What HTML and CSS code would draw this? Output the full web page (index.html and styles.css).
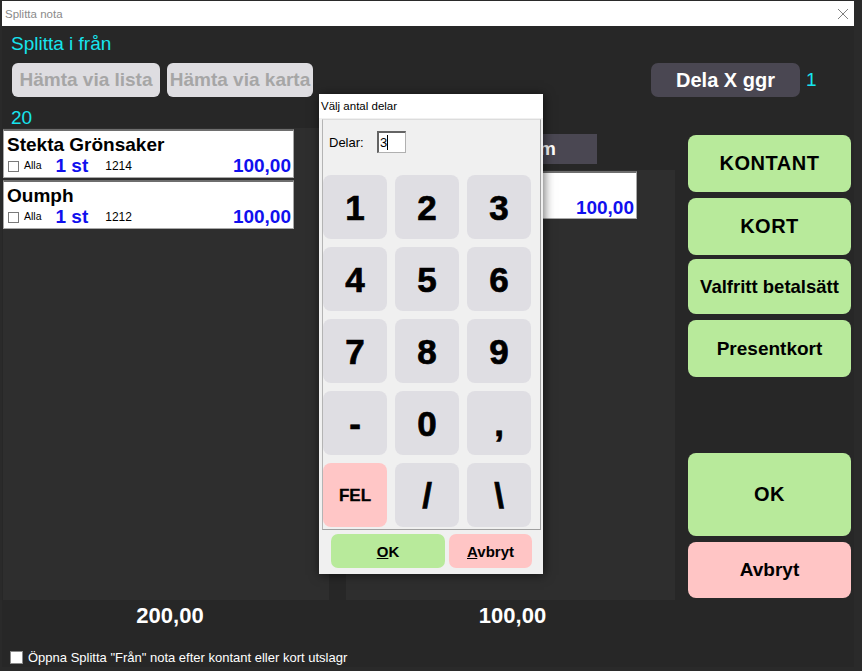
FILE: index.html
```html
<!DOCTYPE html>
<html lang="sv">
<head>
<meta charset="UTF-8">
<meta name="viewport" content="width=device-width, initial-scale=1.0">
<title>Splitta nota</title>
<link rel="stylesheet" href="styles.css">
</head>
<body>
<div class="window">
    <div class="titlebar">
        <span class="title">Splitta nota</span>
        <svg class="close" width="12" height="12" viewBox="0 0 12 12">
            <path d="M1 1L11 11M11 1L1 11" stroke="#808080" stroke-width="1" fill="none"/>
        </svg>
    </div>
    <div class="content">
        <div class="caption">Splitta i från</div>
        <div class="toolbar">
            <button class="btn btn-fetch">Hämta via lista</button>
            <button class="btn btn-fetch">Hämta via karta</button>
            <button class="btn btn-split">Dela X ggr</button>
            <span class="split-count">1</span>
        </div>
        <div class="count">20</div>

        <div class="main">
            <div class="panel panel-from">
                <div class="item">
                    <div class="item-name">Stekta Grönsaker</div>
                    <div class="item-row">
                        <span class="check"></span>
                        <span class="all">Alla</span>
                        <span class="qty">1 st</span>
                        <span class="code">1214</span>
                        <span class="price">100,00</span>
                    </div>
                </div>
                <div class="item">
                    <div class="item-name">Oumph</div>
                    <div class="item-row">
                        <span class="check"></span>
                        <span class="all">Alla</span>
                        <span class="qty">1 st</span>
                        <span class="code">1212</span>
                        <span class="price">100,00</span>
                    </div>
                </div>
            </div>

            <div class="middle">
                <div class="tab">Till rum</div>
                <div class="panel panel-to">
                    <!-- name and quantity sit under the dialog -->
                    <div class="item">
                        <div class="item-name"></div>
                        <div class="item-row">
                            <span class="price">100,00</span>
                        </div>
                    </div>
                </div>
            </div>

            <div class="pay">
                <button class="btn btn-pay btn-caps pay-cash">KONTANT</button>
                <button class="btn btn-pay btn-caps pay-card">KORT</button>
                <button class="btn btn-pay pay-any">Valfritt betalsätt</button>
                <button class="btn btn-pay pay-gift">Presentkort</button>
                <button class="btn btn-pay btn-caps pay-ok">OK</button>
                <button class="btn btn-pay btn-cancel pay-cancel">Avbryt</button>
            </div>
        </div>

        <div class="totals">
            <span class="total total-from">200,00</span>
            <span class="total total-to">100,00</span>
        </div>

        <div class="footer">
            <span class="box"></span>
            <span class="footer-text">Öppna Splitta "Från" nota efter kontant eller kort utslagr</span>
        </div>
    </div>

    <!-- numpad dialog on top of the window -->
    <div class="dialog">
        <div class="dialog-title">Välj antal delar</div>
        <div class="group">
            <div class="parts">
                <span class="parts-label">Delar:</span>
                <span class="parts-input">3<i class="caret"></i></span>
            </div>
            <div class="keys">
                <button class="key">1</button>
                <button class="key">2</button>
                <button class="key">3</button>
                <button class="key">4</button>
                <button class="key">5</button>
                <button class="key">6</button>
                <button class="key">7</button>
                <button class="key">8</button>
                <button class="key">9</button>
                <button class="key">-</button>
                <button class="key">0</button>
                <button class="key">,</button>
                <button class="key key-err">FEL</button>
                <button class="key">/</button>
                <button class="key">\</button>
            </div>
        </div>
        <div class="dialog-actions">
            <button class="dbtn dbtn-ok"><u>O</u>K</button>
            <button class="dbtn dbtn-cancel"><u>A</u>vbryt</button>
        </div>
    </div>
</div>
</body>
</html>
```

FILE: styles.css
```css
html, body {
    margin: 0;
    padding: 0;
    background-color: #2a2a2a;
    font-family: "Liberation Sans", Arial, sans-serif;
}

body {
    height: 671px;
    overflow: hidden;
}

.window {
    position: relative;
    margin: 1px 0 0 2px;
    width: 852px;
    height: 666px;
    background-color: #272727;
    overflow: hidden;
}

.titlebar {
    height: 25px;
    background-color: #fff;
    display: flex;
    align-items: center;
    justify-content: space-between;
}
.title {
    font-size: 11.5px;
    color: #8a8a8a;
    padding-left: 3px;
}
.close {
    margin-right: 5px;
}

.btn {
    font-family: "Liberation Sans", Arial, sans-serif;
    font-weight: bold;
    border: none;
    padding: 0;
    cursor: pointer;
}

.caption {
    padding: 7px 0 0 9px;
    line-height: 22px;
    font-size: 19px;
    color: #16e4ee;
}

.toolbar {
    display: flex;
    align-items: center;
    margin-top: 8px;
    height: 34px;
}
.btn-fetch {
    height: 34px;
    font-size: 19px;
    color: #a6a6a6;
    background-color: #dedde1;
    border-radius: 6px;
}
.btn-fetch:first-child {
    margin-left: 10px;
    width: 148px;
}
.btn-fetch + .btn-fetch {
    margin-left: 7px;
    width: 146px;
}
.btn-split {
    margin-left: auto;
    width: 149px;
    height: 34px;
    font-size: 20px;
    color: #fff;
    background-color: #4a4752;
    border-radius: 7px;
}
.split-count {
    width: 54px;
    padding-left: 6px;
    box-sizing: border-box;
    font-size: 19px;
    color: #16e4ee;
}

.count {
    height: 31px;
    box-sizing: border-box;
    padding: 10px 0 0 9px;
    line-height: 21px;
    font-size: 19px;
    color: #16e4ee;
}

.main {
    display: flex;
    height: 472px;
    padding-left: 1px;
}

.panel {
    background-color: #2e2e2e;
}
.panel-from {
    width: 326px;
    padding-top: 1px;
}

.middle {
    width: 329px;
    margin-left: 17px;
    display: flex;
    flex-direction: column;
}
.tab {
    margin-top: 6px;
    width: 251px;
    height: 30px;
    box-sizing: border-box;
    padding-right: 41px;
    display: flex;
    align-items: center;
    justify-content: flex-end;
    background-color: #4a4752;
    color: #fff;
    font-weight: bold;
    font-size: 19px;
}
.panel-to {
    margin-top: 6px;
    flex: 1;
    padding-top: 1px;
}

.item {
    width: 291px;
    height: 49px;
    box-sizing: border-box;
    background-color: #fff;
    border: 1px solid #a8a8a8;
    border-top: 2px solid #6e6e6e;
    padding: 4px 2px 0 3px;
    margin-bottom: 2px;
}
.panel-to .item {
    height: 48px;
}
.item-name {
    height: 20px;
    line-height: 20px;
    font-size: 19px;
    font-weight: bold;
    color: #000;
}
.item-row {
    display: flex;
    align-items: center;
    height: 20px;
    margin-top: 1px;
}
.check {
    width: 11px;
    height: 11px;
    box-sizing: border-box;
    border: 1px solid #7a7a7a;
    background-color: #fff;
    margin-left: 1px;
}
.all {
    font-size: 10.5px;
    margin-left: 5px;
    margin-top: -3px;
    color: #000;
}
.qty {
    margin-left: 14px;
    font-size: 19px;
    font-weight: bold;
    color: #1010ee;
}
.code {
    margin-left: 17px;
    font-size: 12px;
    color: #000;
}
.price {
    margin-left: auto;
    font-size: 19px;
    font-weight: bold;
    color: #1010ee;
}

.pay {
    width: 163px;
    margin-left: 13px;
    display: flex;
    flex-direction: column;
    padding-top: 7px;
}
.btn-pay {
    font-size: 19px;
    color: #000;
    background-color: #b8ea9b;
    border-radius: 8px;
}
.btn-caps {
    font-size: 20px;
    letter-spacing: 0.5px;
}
.pay-any { font-size: 18.5px; }
.pay-cash { height: 57px; }
.pay-card { height: 57px; margin-top: 6px; }
.pay-any { height: 55px; margin-top: 4px; }
.pay-gift { height: 57px; margin-top: 6px; }
.pay-ok { height: 83px; margin-top: 76px; }
.pay-cancel { height: 56px; margin-top: 6px; }
.btn-cancel {
    background-color: #ffc5c5;
}

.totals {
    display: flex;
    height: 32px;
    align-items: center;
    padding-left: 1px;
}
.total {
    font-size: 22px;
    font-weight: bold;
    color: #fff;
    text-align: center;
}
.total-from {
    width: 326px;
    padding-left: 8px;
    box-sizing: border-box;
}
.total-to {
    width: 329px;
    margin-left: 17px;
    padding-left: 4px;
    box-sizing: border-box;
}

.footer {
    display: flex;
    align-items: center;
    margin-top: 17px;
    height: 16px;
    width: 346px;
    overflow: hidden;
    white-space: nowrap;
}
.box {
    flex: none;
    width: 13px;
    height: 13px;
    box-sizing: border-box;
    margin-left: 8px;
    border: 1px solid #8a8a8a;
    background-color: #fff;
}
.footer-text {
    margin-left: 5px;
    font-size: 13px;
    color: #fff;
}

/* dialog */
.dialog {
    position: absolute;
    left: 317px;
    top: 93px;
    width: 224px;
    height: 480px;
    background-color: #f0f0f0;
    box-shadow: 1px 1px 10px rgba(0, 0, 0, 0.6);
}
.dialog-title {
    height: 24px;
    line-height: 24px;
    padding-left: 2px;
    background-color: #fff;
    font-size: 11.5px;
    color: #000;
}
.group {
    margin: 1px 2px 0 3px;
    height: 411px;
    box-sizing: border-box;
    border: 1px solid #a0a0a0;
    border-top-color: #dcdcdc;
    border-left-color: #b4b4b4;
}
.parts {
    display: flex;
    align-items: center;
    height: 22px;
    padding: 11px 0 22px 6px;
}
.parts-label {
    width: 48px;
    font-size: 13px;
    color: #000;
}
.parts-input {
    width: 29px;
    height: 22px;
    box-sizing: border-box;
    border: 1px solid #b0b0b0;
    border-top: 2px solid #646464;
    border-left: 2px solid #646464;
    background-color: #fff;
    font-size: 13px;
    line-height: 18px;
    padding-left: 1px;
    display: flex;
    align-items: center;
}
.caret {
    display: inline-block;
    width: 1px;
    height: 15px;
    background-color: #000;
}

.keys {
    display: grid;
    grid-template-columns: repeat(3, 64px);
    grid-auto-rows: 64px;
    gap: 8px;
}
.key {
    border: none;
    padding: 0;
    border-radius: 8px;
    background-color: #dfdee3;
    font-family: "Liberation Sans", Arial, sans-serif;
    font-weight: bold;
    font-size: 35px;
    line-height: 1;
    color: #000;
    -webkit-text-stroke: 0.7px #000;
}
.key-err {
    background-color: #ffc6c6;
    font-size: 17px;
    -webkit-text-stroke: 0.3px #000;
}

.dialog-actions {
    display: flex;
    margin-top: 4px;
}
.dbtn {
    height: 34px;
    border: none;
    padding: 0;
    border-radius: 7px;
    font-family: "Liberation Sans", Arial, sans-serif;
    font-weight: bold;
    font-size: 15px;
    color: #000;
}
.dbtn-ok {
    margin-left: 12px;
    width: 114px;
    background-color: #b8ea9b;
}
.dbtn-cancel {
    margin-left: 4px;
    width: 83px;
    background-color: #ffc5c5;
}
```
